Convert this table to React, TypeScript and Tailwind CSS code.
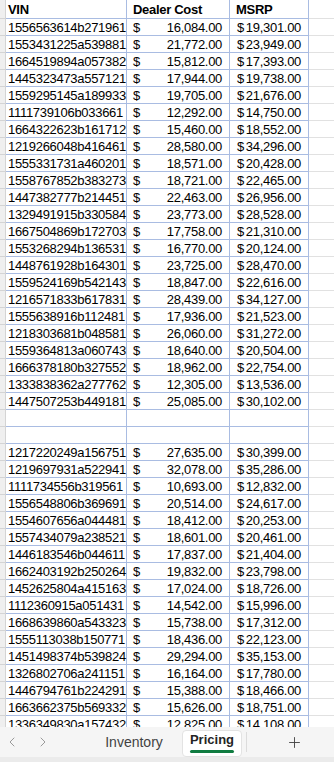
import { ChevronLeft, ChevronRight, Plus } from "lucide-react";

type Row = [string, string, string] | null;

const rows: Row[] = [
  ["1556563614b271961", "16,084.00", "19,301.00"],
  ["1553431225a539881", "21,772.00", "23,949.00"],
  ["1664519894a057382", "15,812.00", "17,393.00"],
  ["1445323473a557121", "17,944.00", "19,738.00"],
  ["1559295145a189933", "19,705.00", "21,676.00"],
  ["1111739106b033661", "12,292.00", "14,750.00"],
  ["1664322623b161712", "15,460.00", "18,552.00"],
  ["1219266048b416461", "28,580.00", "34,296.00"],
  ["1555331731a460201", "18,571.00", "20,428.00"],
  ["1558767852b383273", "18,721.00", "22,465.00"],
  ["1447382777b214451", "22,463.00", "26,956.00"],
  ["1329491915b330584", "23,773.00", "28,528.00"],
  ["1667504869b172703", "17,758.00", "21,310.00"],
  ["1553268294b136531", "16,770.00", "20,124.00"],
  ["1448761928b164301", "23,725.00", "28,470.00"],
  ["1559524169b542143", "18,847.00", "22,616.00"],
  ["1216571833b617831", "28,439.00", "34,127.00"],
  ["1555638916b112481", "17,936.00", "21,523.00"],
  ["1218303681b048581", "26,060.00", "31,272.00"],
  ["1559364813a060743", "18,640.00", "20,504.00"],
  ["1666378180b327552", "18,962.00", "22,754.00"],
  ["1333838362a277762", "12,305.00", "13,536.00"],
  ["1447507253b449181", "25,085.00", "30,102.00"],
  null,
  null,
  ["1217220249a156751", "27,635.00", "30,399.00"],
  ["1219697931a522941", "32,078.00", "35,286.00"],
  ["1111734556b319561", "10,693.00", "12,832.00"],
  ["1556548806b369691", "20,514.00", "24,617.00"],
  ["1554607656a044481", "18,412.00", "20,253.00"],
  ["1557434079a238521", "18,601.00", "20,461.00"],
  ["1446183546b044611", "17,837.00", "21,404.00"],
  ["1662403192b250264", "19,832.00", "23,798.00"],
  ["1452625804a415163", "17,024.00", "18,726.00"],
  ["1112360915a051431", "14,542.00", "15,996.00"],
  ["1668639860a543323", "15,738.00", "17,312.00"],
  ["1555113038b150771", "18,436.00", "22,123.00"],
  ["1451498374b539824", "29,294.00", "35,153.00"],
  ["1326802706a241151", "16,164.00", "17,780.00"],
  ["1446794761b224291", "15,388.00", "18,466.00"],
  ["1663662375b569332", "15,626.00", "18,751.00"],
  ["1336349830a157432", "12,825.00", "14,108.00"],
];

const stub = "w-[6px] shrink-0 bg-[#efefef] border-r border-b border-[#d4d4d4]";
const cell = "shrink-0 border-r border-b border-[#a9bce2] flex items-center";

const DataRow = ({ row }: { row: Row }) => (
  <div className="flex h-[17px]">
    <div className={stub} />
    <div className={`${cell} w-[121px] pl-[2px]`}>{row ? row[0] : ""}</div>
    <div className={`${cell} w-[103px] pl-[6px] pr-[7px] justify-between`}>
      {row && (
        <>
          <span>$</span>
          <span>{row[1]}</span>
        </>
      )}
    </div>
    <div className={`${cell} w-[79px] pr-[7px] justify-end`}>
      {row && (
        <>
          <span>$</span>
          <span className="ml-[2px]">{row[2]}</span>
        </>
      )}
    </div>
    <div className="flex-1 border-b border-[#e1e1e1]" />
  </div>
);

const App = () => {
  return (
    <div
      className="w-[334px] h-[762px] flex flex-col overflow-hidden bg-white text-black"
      style={{ fontFamily: '"Liberation Sans", Arial, sans-serif' }}
    >
      <div className="h-[727px] overflow-hidden text-[13px] tracking-[-0.3px] leading-none">
        <div className="flex h-[19px] font-bold">
          <div className={stub} />
          <div className={`${cell} w-[121px] pl-[2px]`}>VIN</div>
          <div className={`${cell} w-[103px] pl-[6px]`}>Dealer Cost</div>
          <div className={`${cell} w-[79px] pl-[6px]`}>MSRP</div>
          <div className="flex-1 border-b border-[#e1e1e1]" />
        </div>
        {rows.map((r, i) => (
          <DataRow key={i} row={r} />
        ))}
      </div>

      <div className="h-[30px] bg-[#f5f5f5] flex items-center text-[14px]">
        <div className="w-[24px] flex justify-center text-[#9a9a9a]">
          <ChevronLeft size={16} strokeWidth={1.5} />
        </div>
        <div className="ml-[7px] w-[24px] flex justify-center text-[#9a9a9a]">
          <ChevronRight size={16} strokeWidth={1.5} />
        </div>
        <div className="ml-[40px] w-[78px] text-center text-[#424242]">Inventory</div>
        <div className="ml-[9px] w-[60px] h-[27px] mt-[2px] bg-white border border-[#e3e3e3] rounded-[4px] flex flex-col items-center justify-center">
          <span className="text-[13px] font-bold text-[#242424] leading-none">Pricing</span>
          <span className="mt-[4px] w-[44px] h-[3px] rounded-full bg-[#107c41]" />
        </div>
        <div className="ml-[4px] w-px h-[20px] bg-[#dcdcdc]" />
        <div className="ml-[39px] text-[#424242]">
          <Plus size={17} strokeWidth={1.3} />
        </div>
      </div>
      <div className="flex-1 bg-[#ebebeb]" />
    </div>
  );
};

export default App;
